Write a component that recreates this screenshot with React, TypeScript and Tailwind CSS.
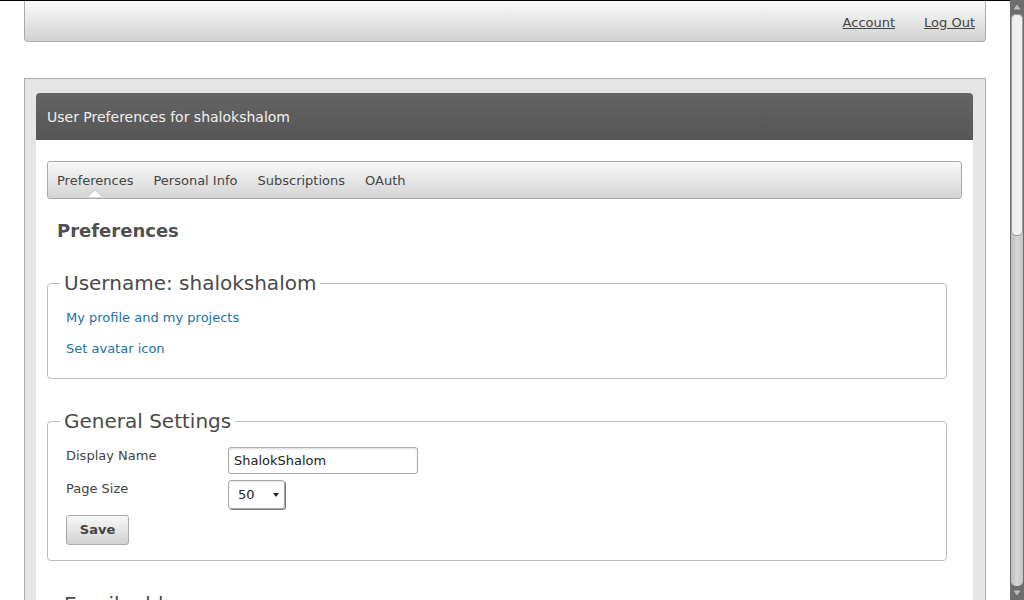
import React from 'react';

const font = { fontFamily: '"DejaVu Sans", Verdana, sans-serif' };

function Scrollbar() {
  return (
    <div className="w-[14px] h-[600px] bg-[#6d6d6d] flex flex-col items-center shrink-0">
      <div className="h-[14px] w-full flex items-center justify-center">
        <svg width="8" height="6" viewBox="0 0 8 6">
          <path d="M4 0.5 L7.5 5.5 L0.5 5.5 Z" fill="#bdbdbd" />
        </svg>
      </div>
      <div className="flex-1 w-[12px] bg-gradient-to-r from-[#bdbdbd] via-[#d6d6d6] to-[#c4c4c4] rounded-[5px] flex flex-col">
        <div className="h-[222px] w-full bg-[#efefef] border border-[#9a9a9a] rounded-[5px]" />
      </div>
      <div className="h-[14px] w-full flex items-center justify-center">
        <svg width="8" height="6" viewBox="0 0 8 6">
          <path d="M0.5 0.5 L7.5 0.5 L4 5.5 Z" fill="#bdbdbd" />
        </svg>
      </div>
    </div>
  );
}

export default function App() {
  const tabs = ['Preferences', 'Personal Info', 'Subscriptions', 'OAuth'];

  return (
    <div className="w-[1024px] h-[600px] overflow-hidden flex bg-white" style={font}>
      <div className="flex-1 h-[600px] overflow-hidden border-t border-black">
        {/* Top bar */}
        <div className="mx-[24px] w-[962px] h-[41px] bg-gradient-to-b from-[#fbfbfb] to-[#d1d1d1] border border-t-0 border-[#aaaaaa] rounded-b-[4px] flex items-center justify-end pt-[3px] pr-[10px] gap-[29px] text-[13px] text-[#444444]">
          <a className="underline">Account</a>
          <a className="underline">Log Out</a>
        </div>

        {/* Main container */}
        <div className="mx-[24px] mt-[36px] w-[962px] bg-[#e5e5e5] border border-[#aaaaaa] pt-[14px] pl-[11px] pr-[12px]">
          <div className="bg-white rounded-t-[4px]">
            <div className="h-[47px] bg-gradient-to-b from-[#646464] to-[#565656] rounded-t-[4px] flex items-center pl-[11px] pt-[2px] text-[14px] text-[#f0f0f0]">
              User Preferences for shalokshalom
            </div>

            <div className="pt-[21px] px-[11px] pb-[20px]">
              {/* Tabs */}
              <div className="relative h-[38px] bg-gradient-to-b from-[#f8f8f8] to-[#d4d4d4] border border-[#aaaaaa] rounded-[3px] flex items-center pl-[9px] pt-[2px] gap-[20px] text-[13px] text-[#444444]">
                {tabs.map((t, i) => (
                  <span key={t} className="relative">
                    {t}
                    {i === 0 && (
                      <svg
                        className="absolute left-1/2 -translate-x-1/2 top-[18px]"
                        width="16"
                        height="8"
                        viewBox="0 0 16 8"
                      >
                        <path d="M0 8 L8 0 L16 8 Z" fill="#ffffff" />
                        <path d="M0.5 8 L8 0.7 L15.5 8" fill="none" stroke="#b8b8b8" strokeWidth="1" />
                      </svg>
                    )}
                  </span>
                ))}
              </div>

              <h2 className="mt-[21px] ml-[10px] text-[18px] leading-[22px] font-bold text-[#505050]">
                Preferences
              </h2>

              {/* Username fieldset */}
              <fieldset className="mt-[29px] mr-[15px] border border-[#bbbbbb] rounded-[4px] pl-[18px] pb-[20px]">
                <legend className="ml-[-6px] px-[4px] text-[20px] leading-[24px] text-[#4a4a4a]">
                  Username: shalokshalom
                </legend>
                <div className="flex flex-col gap-[13px] mt-[14px] text-[13px] leading-[18px] text-[#1a72a6]">
                  <a>My profile and my projects</a>
                  <a>Set avatar icon</a>
                </div>
              </fieldset>

              {/* General settings fieldset */}
              <fieldset className="mt-[30px] mr-[15px] border border-[#bbbbbb] rounded-[4px] pl-[18px] pb-[15px]">
                <legend className="ml-[-6px] px-[4px] text-[20px] leading-[24px] text-[#4a4a4a]">
                  General Settings
                </legend>
                <div className="mt-[14px] grid grid-cols-[162px_auto] gap-y-[6px] text-[13px] text-[#444444] items-start">
                  <label className="leading-[16px] pt-[1px]">Display Name</label>
                  <div className="w-[190px] h-[27px] border border-[#aaaaaa] rounded-[3px] shadow-[inset_0_1px_2px_rgba(0,0,0,0.15)] flex items-center pl-[5px] text-[#222222]">
                    ShalokShalom
                  </div>
                  <label className="leading-[16px] pt-[1px]">Page Size</label>
                  <div className="w-[57px] h-[29px] border border-[#aaaaaa] rounded-[3px] shadow-[inset_0_1px_2px_rgba(0,0,0,0.12),1px_1px_0_#777777] flex items-center pl-[9px] text-[#222222]">
                    <span className="flex-1">50</span>
                    <svg width="6" height="4" viewBox="0 0 6 4" className="mr-[5px]">
                      <path d="M0 0 L6 0 L3 4 Z" fill="#222222" />
                    </svg>
                  </div>
                  <div className="col-span-2">
                    <button className="w-[63px] h-[30px] bg-gradient-to-b from-[#f8f8f8] to-[#d2d2d2] border border-[#aaaaaa] rounded-[3px] text-[13px] font-bold text-[#444444]">
                      Save
                    </button>
                  </div>
                </div>
              </fieldset>

              {/* Email fieldset */}
              <fieldset className="mt-[31px] mr-[15px] border border-[#bbbbbb] rounded-[4px] pl-[18px] pb-[20px] h-[120px]">
                <legend className="ml-[-6px] px-[4px] text-[20px] leading-[24px] text-[#4a4a4a]">
                  Email addresses
                </legend>
              </fieldset>
            </div>
          </div>
        </div>
      </div>
      <Scrollbar />
    </div>
  );
}
